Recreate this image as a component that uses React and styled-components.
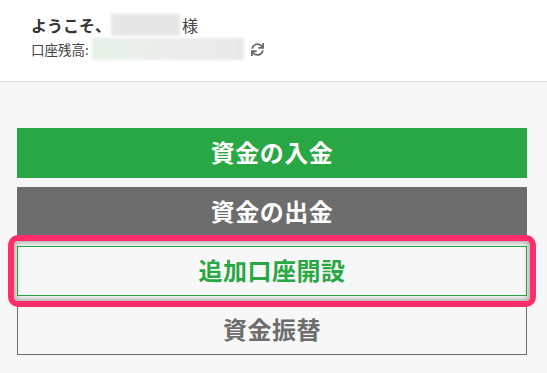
import React from 'react'
import styled, { createGlobalStyle } from 'styled-components'
import { FaSync } from 'react-icons/fa'

const GlobalStyle = createGlobalStyle`
  html, body {
    margin: 0;
    padding: 0;
    background: #f7f7f7;
    font-family: "Noto Sans CJK JP", "Noto Sans", sans-serif;
  }
`

const App = () => (
  <>
    <GlobalStyle/>
    <Header>
      <Welcome>
        ようこそ、<NameBlur/><Sama>様</Sama>
      </Welcome>
      <Balance>
        口座残高:<BalanceBlur/>
        <RefreshIcon><FaSync/></RefreshIcon>
      </Balance>
    </Header>
    <Menu>
      <Button variant="green">資金の入金</Button>
      <Button variant="gray">資金の出金</Button>
      <Highlighted>
        <Button variant="greenOutline">追加口座開設</Button>
        <Marker/>
      </Highlighted>
      <Button variant="grayOutline">資金振替</Button>
    </Menu>
  </>
)

const Header = styled.header`
  box-sizing: border-box;
  height: 82px;
  padding: 13px 31px 0;
  background: #fff;
  border-bottom: 1px solid #dcdcdc;
`

const Welcome = styled.div`
  display: flex;
  align-items: center;
  height: 24px;
  font-size: 16px;
  font-weight: bold;
  color: #333;
`

const NameBlur = styled.span`
  display: inline-block;
  width: 69px;
  height: 22px;
  background: #e6e6e6;
  filter: blur(1.5px);
`

const Sama = styled.span`
  font-weight: normal;
  color: #444;
  margin-left: 2px;
`

const Balance = styled.div`
  display: flex;
  align-items: center;
  height: 24px;
  font-size: 13.5px;
  color: #444;
`

const BalanceBlur = styled.span`
  display: inline-block;
  width: 152px;
  height: 22px;
  margin-left: 3px;
  background: linear-gradient(90deg, #e6f1e6 0%, #ebebeb 55%, #e8e8e8 100%);
  filter: blur(1.5px);
`

const RefreshIcon = styled.span`
  display: flex;
  margin-left: 7px;
  color: #6a6a6a;
  font-size: 13px;
`

const Menu = styled.main`
  display: flex;
  flex-direction: column;
  gap: 9px;
  padding: 46px 20px 20px 17px;
`

const colors = {
  green: { bg: '#29a744', border: '#29a744', text: '#fff' },
  gray: { bg: '#6d6d6d', border: '#6d6d6d', text: '#fff' },
  greenOutline: { bg: 'transparent', border: '#29a744', text: '#29a744' },
  grayOutline: { bg: 'transparent', border: '#6d6d6d', text: '#6d6d6d' },
}

const Button = styled.button`
  box-sizing: border-box;
  width: 100%;
  height: 50px;
  display: flex;
  align-items: center;
  justify-content: center;
  background: ${p => colors[p.variant].bg};
  border: 1px solid ${p => colors[p.variant].border};
  color: ${p => colors[p.variant].text};
  font-family: inherit;
  font-size: 24px;
  font-weight: bold;
  letter-spacing: 0.5px;
  padding: 0 0 3px;
  cursor: pointer;
`

const Highlighted = styled.div`
  position: relative;
`

const Marker = styled.div`
  position: absolute;
  top: -11px;
  bottom: -11px;
  left: -9px;
  right: -9px;
  border: 6px solid #ff2d6b;
  border-radius: 10px;
  box-shadow: inset 0 0 5px 2px rgba(0, 0, 0, 0.3);
  pointer-events: none;
`

export default App
